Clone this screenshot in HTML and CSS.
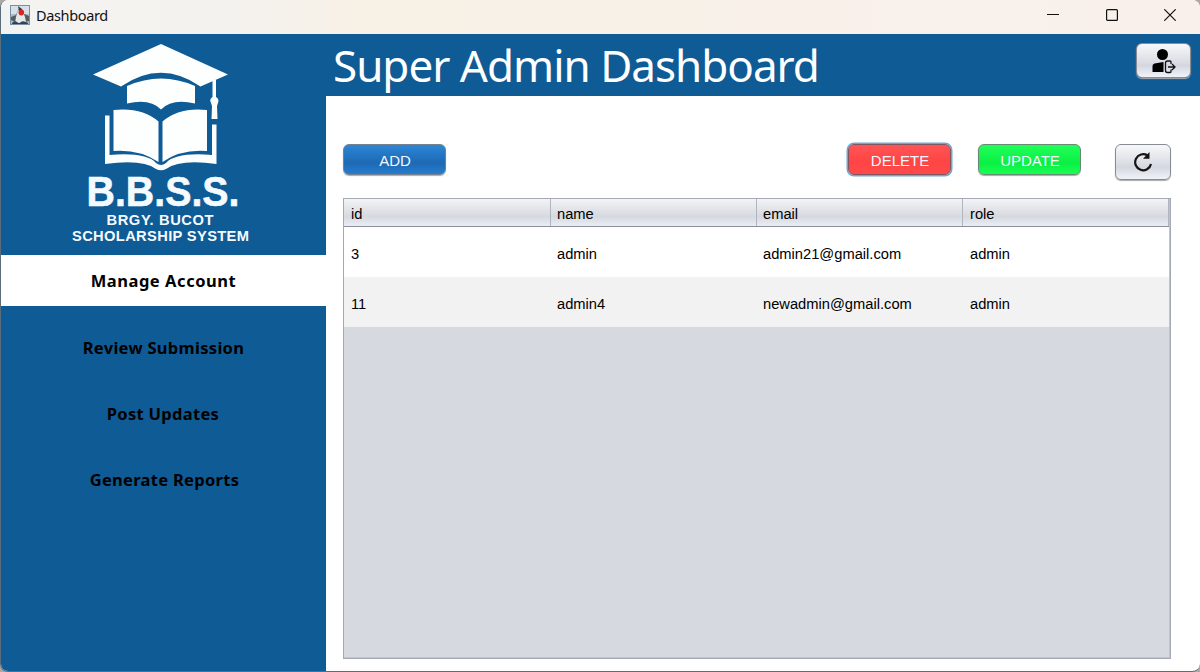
FILE: index.html
```html
<!DOCTYPE html>
<html lang="en">
<head>
<meta charset="utf-8">
<title>Dashboard</title>
<link rel="stylesheet" href="styles.css">
</head>
<body>
<div class="window">
  <header class="titlebar">
    <svg class="app-icon" width="20" height="20" viewBox="0 0 20 20">
      <rect x=".5" y=".5" width="19" height="19" fill="#d5e0e9" stroke="#7590a8"/>
      <path d="M1 9h18v10H1z" fill="#aebbc5"/>
      <path d="M1 12l5-2 2-5 2-2 4 6 5 2v5l-4 1H5l-4-2z" fill="#555d62"/>
      <path d="M6 12l2-7 5 2 2 5 1 5-5 2-6-1z" fill="#e5e8e9"/>
      <path d="M8 1l4 3 1 3-4-1z" fill="#353a3e"/>
      <ellipse cx="11.300" cy="7.500" rx="2.800" ry="2.900" fill="#d92520"/>
      <path d="M2 18q3-3 5-1t4 0 7 1v1H2z" fill="#394148"/>
    </svg>
    <span class="caption">Dashboard</span>
    <div class="window-controls">
      <svg width="12" height="12" viewBox="0 0 12 12"><path d="M0 5.5h12"/></svg>
      <svg width="12" height="12" viewBox="0 0 12 12"><rect x=".6" y=".6" width="10.8" height="10.8" rx="1"/></svg>
      <svg width="12" height="12" viewBox="0 0 12 12"><path d="M.3.3l11.4 11.4M11.7.3L.3 11.7"/></svg>
    </div>
  </header>
  <div class="body">
    <aside class="sidebar">
      <svg class="logo" width="325" height="221" viewBox="1 34 325 221">
        <g fill="#fdfefe">
          <path d="M161 44L228 74.500L200.500 86.500Q161 59 121 86.500L93 74.500Z"/>
          <path d="M127 86Q161 71 195 86V103.500Q172 98 161 109.500Q150 98 127 103.500Z"/>
          <path d="M113.500 110Q142 107 158.500 121.500V162Q139 149 113.500 151Z"/>
          <path d="M207 110Q179 107 162.500 121.500V162Q181 149 207 151Z"/>
          <path d="M105 115.500h4.500v39.500Q146 152 156 163Q161 167 166 163Q176 152 212 155V124.500h4.500V164Q180 159 166 169Q161 171.500 156 169Q143 159 105 164Z"/>
          <path d="M212.500 80h3.500v17a4.500 4.500 0 0 1 2 6l-1 3 .500 13h-6l.500-13-1-3a4.500 4.500 0 0 1 1.500-6z"/>
        </g>
        <g class="logo-text">
          <text class="logo-name" x="86.500" y="206.300" textLength="153" lengthAdjust="spacingAndGlyphs">B.B.S.S.</text>
          <text class="logo-line" x="106.500" y="224.500" textLength="107" lengthAdjust="spacing">BRGY. BUCOT</text>
          <text class="logo-line" x="72" y="241" textLength="177" lengthAdjust="spacing">SCHOLARSHIP SYSTEM</text>
        </g>
      </svg>
      <nav class="nav">
        <a class="nav-item active">Manage Account</a>
        <a class="nav-item review">Review Submission</a>
        <a class="nav-item post">Post Updates</a>
        <a class="nav-item generate">Generate Reports</a>
      </nav>
    </aside>
    <main class="main">
      <div class="page-header">
        <h1>Super Admin Dashboard</h1>
        <button class="btn icon-btn profile">
          <svg width="24" height="26" viewBox="0 0 24 26">
            <circle cx="10.500" cy="6.500" r="5.500" fill="#000"/>
            <path d="M0.500 24v-6q0-2 2-2.500L11.500 14v10z" fill="#000"/>
            <path d="M19 16v-2q0-1-1-1H15.500q-2 0-2 2v7.500q0 2 2 2H18q1 0 1-1v-2M16 19H23M20 16l3 3-3 3" fill="none" stroke="#111" stroke-width="1.300"/>
          </svg>
        </button>
      </div>
      <div class="toolbar">
        <button class="btn add">ADD</button>
        <button class="btn delete">DELETE</button>
        <button class="btn update">UPDATE</button>
        <button class="btn icon-btn refresh">
          <svg width="20" height="20" viewBox="0 0 20 20">
            <path d="M14.500 3.500A8 8 0 1 0 18 12" fill="none" stroke="#151515" stroke-width="2.200"/>
            <path d="M16.500 0v6.800H10z" fill="#151515"/>
          </svg>
        </button>
      </div>
      <div class="table">
        <div class="row head"><span>id</span><span>name</span><span>email</span><span>role</span></div>
        <div class="row"><span>3</span><span>admin</span><span>admin21@gmail.com</span><span>admin</span></div>
        <div class="row alt"><span>11</span><span>admin4</span><span>newadmin@gmail.com</span><span>admin</span></div>
      </div>
    </main>
  </div>
</div>
</body>
</html>
```
FILE: styles.css
```css
* { box-sizing: border-box; }
body { margin: 0; background: #a9a9a9; overflow: hidden; }
.window {
  width: 1200px; height: 672px;
  border: solid #5b6c7a; border-width: 0 0 1px 1px;
  border-radius: 8px;
  overflow: hidden;
  display: flex; flex-direction: column;
  background: #fff;
}
.titlebar {
  height: 34px; flex: none;
  display: flex; align-items: center;
  padding: 0 24px 4px 9px;
  background: linear-gradient(90deg, #f3f3f1 0, #f4f2ee 20%, #f8f1e6 30%, #f8f1e9 60%, #f9f0ec 100%);
  font: 14.500px "Noto Sans", sans-serif; color: #111;
}
.caption { margin-left: 6px; letter-spacing: -0.350px; line-height: 18px; padding-bottom: 1px; }
.window-controls { margin-left: auto; display: flex; gap: 46.500px; }
.window-controls svg { fill: none; stroke: #111; stroke-width: 1.200; }
.body { flex: 1; display: flex; min-height: 0; }
.sidebar { width: 325px; flex: none; background: #0f5b96; }
.logo { display: block; }
.logo-text { font-family: "Liberation Sans", Arial, sans-serif; font-weight: 700; fill: #f5fafe; }
.logo-name { font-size: 42.500px; stroke: #f5fafe; stroke-width: .6px; }
.logo-line { font-size: 14.700px; }
.nav { display: flex; flex-direction: column; gap: 15px; }
.nav-item {
  height: 51px;
  display: flex; align-items: center; justify-content: center;
  font: 700 16.500px "Noto Sans", sans-serif; letter-spacing: .3px;
  color: #000;
}
.active { background: #fff; margin-bottom: 1px; letter-spacing: .55px; }
.post { padding-right: 1px; }
.generate { padding-left: 2px; }
.main { flex: 1; min-width: 0; display: flex; flex-direction: column; }
.page-header {
  height: 62px; flex: none;
  display: flex; align-items: flex-start; justify-content: space-between;
  padding: 0 9px 0 7px;
  background: #0f5b96;
}
h1 { margin: 0; font: 400 44px/63px "Noto Sans", sans-serif; letter-spacing: -1px; color: #fff; white-space: nowrap; }
.btn {
  width: 103px; height: 31px; padding: 1px 0 0 1px;
  border: 1px solid #75818e; border-radius: 6px;
  box-shadow: 0 1px 1px #aaa;
  font: 15px/30px "Liberation Sans", Arial, sans-serif;
  color: #f2f8ff;
}
.icon-btn {
  display: flex; align-items: center; justify-content: center;
  padding: 0; border-color: #868b94;
  background: linear-gradient(#f7f8fa, #dde0e6 50%, #d4d7df 65%, #f0f3fa);
}
.profile { width: 55px; height: 35px; margin-top: 9px; }
.toolbar { display: flex; align-items: flex-start; padding: 48px 29px 0 17px; height: 102px; flex: none; }
.add { background: linear-gradient(#2c86d6, #1d69b4 62%, #267dce); }
.delete { margin: 0 27px 0 402px; background: linear-gradient(#ff5555, #ff4444 60%, #ff4b4b); border-color: #805660; box-shadow: 0 0 0 1.500px #72a5cf; }
.update { margin-right: 34px; background: linear-gradient(#20ff58, #0bef45 62%, #1aff54); border-color: #668b72; }
.refresh { width: 56px; height: 36px; }
.table {
  width: 828px; height: 461px; margin-left: 17px; flex: none;
  border: 1px solid #a5a9b3;
  box-shadow: inset -1px 0 #c0c4d0, inset 0 -1px #c0c4d0;
  background: #d6d9e0;
  font: 14.700px "Liberation Sans", Arial, sans-serif; color: #000;
}
.row { display: grid; grid-template-columns: 207px 206px 206px 206px; height: 50px; margin-right: 1px; background: #fff; }
.row span { display: flex; align-items: center; padding: 4px 0 0 7px; }
.row span:nth-child(2), .row span:nth-child(3) { padding-left: 6px; }
.alt { background: #f2f2f2; }
.head { height: 28px; border-bottom: 1px solid #898e9a; background: linear-gradient(#f3f4f7, #dfe1e6 45%, #d6d9df 65%, #e9edf5); }
.head span { border-right: 1px solid #b1b5bf; padding: 2px 0 0 7px; }
```
